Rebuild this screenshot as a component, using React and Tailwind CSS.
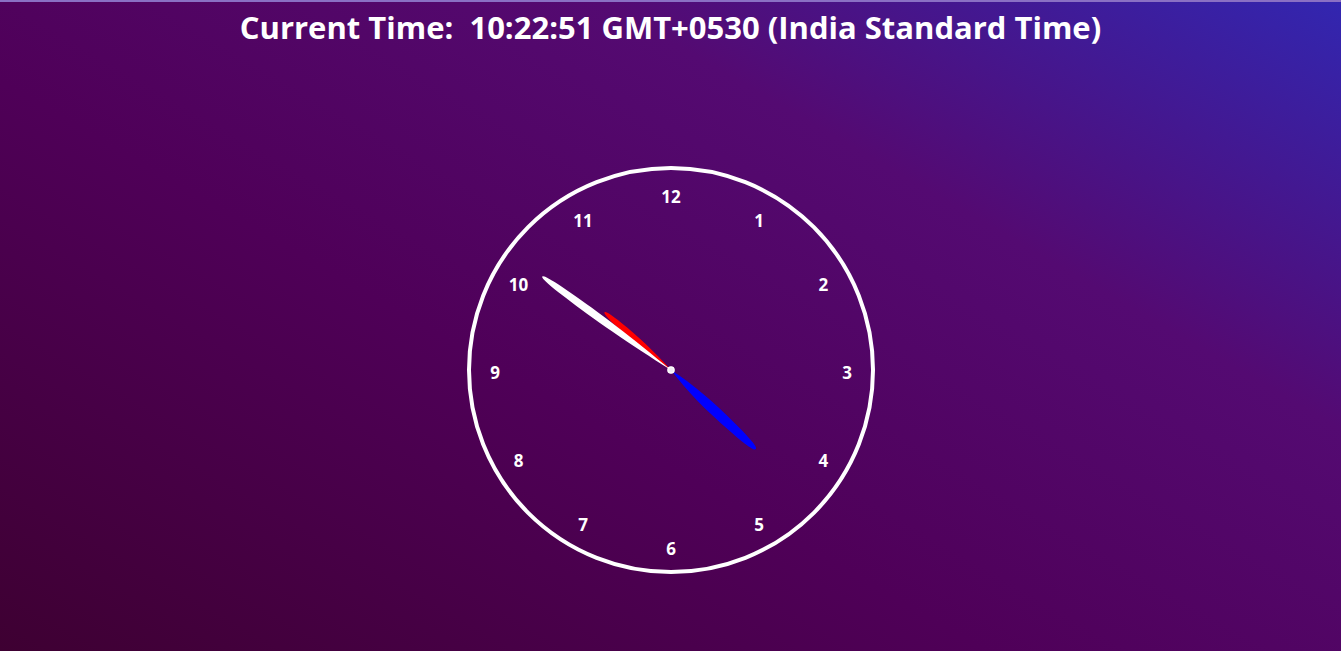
import React from "react";

const nums = [12, 1, 2, 3, 4, 5, 6, 7, 8, 9, 10, 11];

function Hand({ angle, length, width, color, bias = 0.5 }) {
  const L = length;
  const w = width / 2;
  const m = L * bias;
  const d = `M0,0 C ${w},${-m * 0.5} ${w * 1.3},${-m} ${w},${-(m + (L - m) * 0.5)} C ${w * 0.8},${-L + 2} ${w * 0.3},${-L} 0,${-L} C ${-w * 0.3},${-L} ${-w * 0.8},${-L + 2} ${-w},${-(m + (L - m) * 0.5)} C ${-w * 1.3},${-m} ${-w},${-m * 0.5} 0,0 Z`;
  return <path d={d} fill={color} transform={`rotate(${angle})`} />;
}

export default function App() {
  return (
    <div
      className="relative min-h-[651px] w-full overflow-hidden border-t-2 border-[#8a70c4] bg-[linear-gradient(30deg,#3e0032_0%,#4f0058_40%,#540a72_70%,#3226b0_100%)] text-white"
      style={{ fontFamily: '"Open Sans", "Noto Sans", sans-serif' }}
    >
      <h1 className="whitespace-pre pt-[5px] text-center text-[31px] font-bold leading-[40px]">
        Current Time:  10:22:51 GMT+0530 (India Standard Time)
      </h1>
      <div className="mt-[119px] flex justify-center">
        <div className="relative ml-[1px] h-[408px] w-[408px] rounded-full border-4 border-white">
          {nums.map((n, i) => {
            const a = (i * 30 * Math.PI) / 180;
            const x = 200 + 176 * Math.sin(a);
            const y = 200 - 176 * Math.cos(a) + 2;
            return (
              <span
                key={n}
                className="absolute text-[17px] font-bold leading-none"
                style={{ left: x, top: y, transform: "translate(-50%, -50%)" }}
              >
                {n}
              </span>
            );
          })}
          <svg
            className="absolute left-0 top-0"
            width="400"
            height="400"
            viewBox="-200 -200 400 400"
          >
            <Hand angle={133} length={116} width={9} color="#0000ff" bias={0.45} />
            <Hand angle={311} length={88} width={6} color="#ff0000" bias={0.55} />
            <Hand angle={306} length={159} width={7} color="#ffffff" bias={0.6} />
            <circle cx="0" cy="0" r="3.2" fill="#f4eef8" stroke="#ffffff" strokeWidth="1.2" />
          </svg>
        </div>
      </div>
    </div>
  );
}
